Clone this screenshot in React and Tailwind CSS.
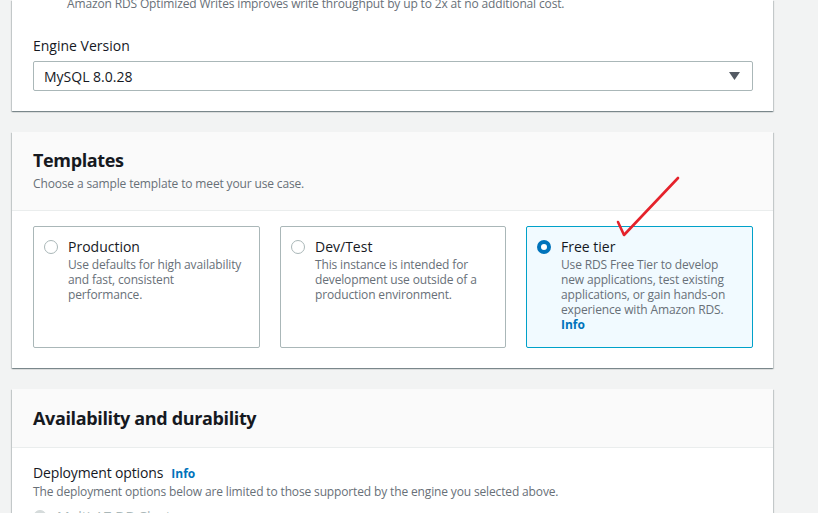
import React from "react";

const cardShadow =
  "shadow-[0_1px_1px_0_rgba(0,28,36,0.3),1px_1px_1px_0_rgba(0,28,36,0.15),-1px_1px_1px_0_rgba(0,28,36,0.15)]";

function Radio({ checked, disabled }) {
  if (checked) {
    return <span className="mt-[3px] block h-[14px] w-[14px] shrink-0 rounded-full border-[4px] border-[#0073bb] bg-white" />;
  }
  if (disabled) {
    return <span className="mt-[3px] block h-[14px] w-[14px] shrink-0 rounded-full border border-[#d5dbdb] bg-[#d5dbdb]" />;
  }
  return <span className="mt-[3px] block h-[14px] w-[14px] shrink-0 rounded-full border border-[#aab7b8] bg-white" />;
}

function Tile({ title, desc, checked, info }) {
  return (
    <div
      className={`flex h-[122px] gap-[10px] rounded-[2px] border px-[10px] pt-[10px] ${
        checked ? "border-[#00a1c9] bg-[#f1faff]" : "border-[#aab7b8] bg-white"
      }`}
    >
      <Radio checked={checked} />
      <div>
        <div className="text-[14px] leading-[20px] text-[#16191f]">{title}</div>
        <div className="text-[12px] leading-[15px] tracking-[-0.012em] text-[#687078]">{desc}</div>
        {info && <div className="text-[12px] font-bold leading-[15px] text-[#0073bb]">Info</div>}
      </div>
    </div>
  );
}

export default function App() {
  return (
    <div className="relative h-[513px] w-[818px] overflow-hidden bg-[#f2f3f3] font-['Open_Sans',sans-serif]">
      <div className="flex w-[773px] flex-col gap-[21px] pl-[12px]">
        {/* engine card (cut off at top) */}
        <div className={`bg-white pb-[20px] pl-[21px] pr-[20px] ${cardShadow}`}>
          <p className="-mt-[4px] pl-[34px] text-[12px] leading-[16px] tracking-[-0.012em] text-[#687078]">
            Amazon RDS Optimized Writes improves write throughput by up to 2x at no additional cost.
          </p>
          <div className="mt-[24px] text-[14px] leading-[20px] text-[#16191f]">Engine Version</div>
          <div className="mt-[5px] flex h-[30px] items-center justify-between rounded-[2px] border border-[#aab7b8] pl-[10px] pr-[12px]">
            <span className="text-[14px] text-[#16191f]">MySQL 8.0.28</span>
            <svg width="11" height="8" viewBox="0 0 11 8">
              <path d="M0 0 H11 L5.5 8 Z" fill="#545b64" />
            </svg>
          </div>
        </div>

        {/* templates */}
        <div className={`bg-white ${cardShadow}`}>
          <div className="border-b border-[#eaeded] bg-[#fafafa] pb-[18px] pl-[21px] pr-[20px] pt-[16px]">
            <h2 className="text-[18px] font-bold leading-[24px] tracking-[-0.02em] text-[#16191f]">Templates</h2>
            <p className="mt-[4px] text-[12px] leading-[16px] tracking-[-0.012em] text-[#687078]">
              Choose a sample template to meet your use case.
            </p>
          </div>
          <div className="grid grid-cols-[227px_226px_227px] gap-[20px] pb-[20px] pl-[21px] pr-[20px] pt-[15px]">
            <Tile title="Production" desc="Use defaults for high availability and fast, consistent performance." />
            <Tile title="Dev/Test" desc="This instance is intended for development use outside of a production environment." />
            <Tile
              title="Free tier"
              checked
              info
              desc="Use RDS Free Tier to develop new applications, test existing applications, or gain hands-on experience with Amazon RDS."
            />
          </div>
        </div>

        {/* availability */}
        <div className={`bg-white ${cardShadow}`}>
          <div className="border-b border-[#eaeded] bg-[#fafafa] pb-[17px] pl-[21px] pr-[20px] pt-[17px]">
            <h2 className="text-[18px] font-bold leading-[24px] tracking-[-0.02em] text-[#16191f]">
              Availability and durability
            </h2>
          </div>
          <div className="pl-[21px] pr-[20px] pt-[15px]">
            <div className="flex items-baseline gap-[8px]">
              <span className="text-[14px] leading-[20px] tracking-[-0.01em] text-[#16191f]">Deployment options</span>
              <span className="text-[12px] font-bold text-[#0073bb]">Info</span>
            </div>
            <p className="mt-[1px] text-[12px] leading-[16px] tracking-[-0.012em] text-[#687078]">
              The deployment options below are limited to those supported by the engine you selected above.
            </p>
            <div className="mt-[7px] flex gap-[10px]">
              <Radio disabled />
              <span className="text-[14px] leading-[20px] text-[#aab7b8]">Multi-AZ DB Cluster - new</span>
            </div>
          </div>
        </div>
      </div>

      {/* red hand-drawn check mark */}
      <svg className="absolute left-[612px] top-[172px]" width="72" height="70" viewBox="612 172 72 70">
        <polyline
          points="618,222 624,235 678,178"
          fill="none"
          stroke="#e5222b"
          strokeWidth="2.6"
          strokeLinecap="round"
          strokeLinejoin="round"
        />
      </svg>
    </div>
  );
}
